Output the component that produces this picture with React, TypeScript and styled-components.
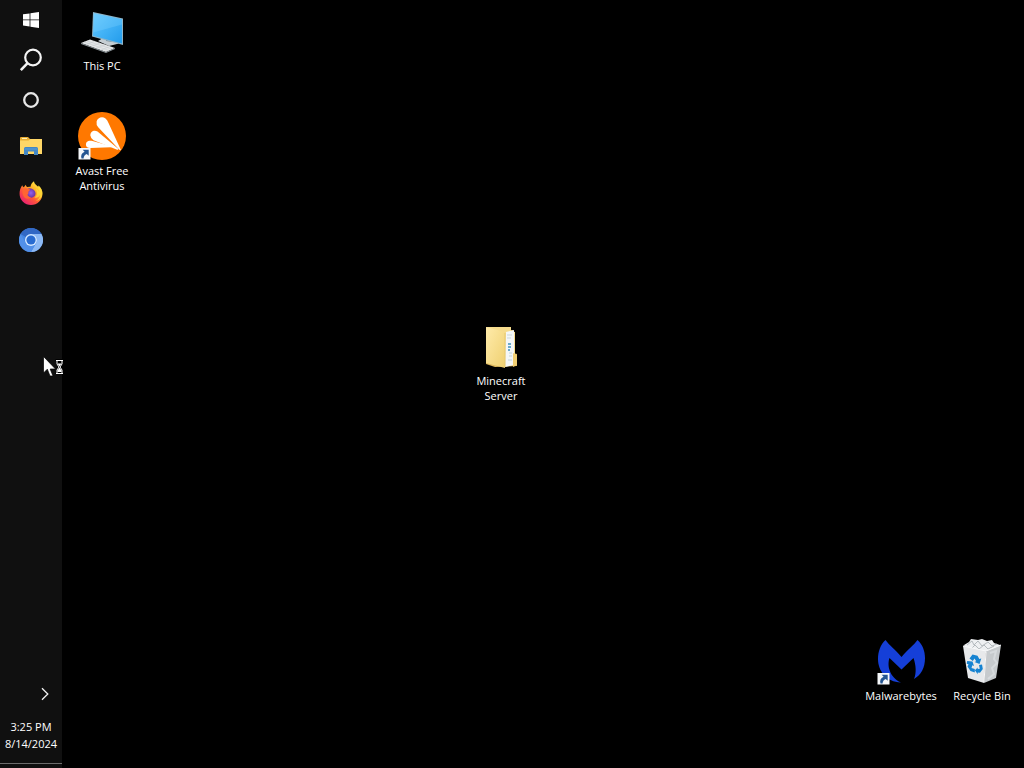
import React from "react";
import styled, { createGlobalStyle } from "styled-components";

const GlobalStyle = createGlobalStyle`
  * { box-sizing: border-box; }
  body {
    margin: 0;
    background: #000;
    color: #fff;
    font-family: "Segoe UI", "Open Sans", "Noto Sans", sans-serif;
    font-size: 11px;
    overflow: hidden;
  }
  svg { display: block; }
`;

const Screen = styled.div`
  position: relative;
  display: flex;
  min-height: 100vh;
`;

const Taskbar = styled.nav`
  display: flex;
  flex-direction: column;
  flex: none;
  width: 62px;
  background: #101010;
`;

const Group = styled.div<{ $top?: number }>`
  display: flex;
  flex-direction: column;
  margin-top: ${(p) => p.$top ?? 0}px;
`;

const BarButton = styled.button<{ $height: number }>`
  display: flex;
  align-items: center;
  justify-content: center;
  height: ${(p) => p.$height}px;
  padding: 0;
  border: 0;
  background: none;
  color: #fff;
`;

const Tray = styled.div`
  display: flex;
  flex-direction: column;
  margin-top: auto;
`;

const TrayToggle = styled(BarButton)`
  align-self: flex-end;
  width: 34px;
`;

const Clock = styled.button`
  padding: 0;
  margin: 8px 0 11px;
  border: 0;
  background: none;
  color: #fff;
  font: inherit;
  line-height: 17px;
  text-align: center;
`;

const ShowDesktop = styled.button`
  height: 5px;
  padding: 0;
  border: 0;
  border-top: 1px solid #6c6c6c;
  background: none;
`;

const Desktop = styled.main`
  position: relative;
  flex: 1;
`;

const Shortcut = styled.button<{ $left?: number; $top?: number; $right?: number; $bottom?: number }>`
  position: absolute;
  ${(p) => p.$left !== undefined && `left: ${p.$left}px;`}
  ${(p) => p.$top !== undefined && `top: ${p.$top}px;`}
  ${(p) => p.$right !== undefined && `right: ${p.$right}px;`}
  ${(p) => p.$bottom !== undefined && `bottom: ${p.$bottom}px;`}
  display: flex;
  flex-direction: column;
  align-items: center;
  gap: 3px;
  width: 76px;
  padding: 0 8px;
  border: 0;
  background: none;
  color: #fff;
  font: inherit;
  line-height: 15px;
  text-align: center;
`;

const Label = styled.span`
  display: flex;
  flex-direction: column;
  align-items: center;
  white-space: nowrap;
`;

const Pointer = styled.div`
  position: absolute;
  left: 43px;
  top: 356px;
  pointer-events: none;
`;

const StartIcon = () => (
  <svg width="16" height="16" viewBox="0 0 16 16" fill="#fff">
    <path d="M0 2.3 6.6 1.4V7.5H0zM7.4 1.3 16 0V7.5H7.4zM0 8.3H6.6V14.5L0 13.6zM7.4 8.3H16V16L7.4 14.7z" />
  </svg>
);

const SearchIcon = () => (
  <svg width="24" height="24" viewBox="0 0 24 24" fill="none" stroke="#f4f4f4" strokeWidth="2.2">
    <circle cx="14" cy="9.5" r="7.8" />
    <path d="M8.6 15.2 1.8 22.2" strokeWidth="2.6" />
  </svg>
);

const CortanaIcon = () => (
  <svg width="18" height="18" viewBox="0 0 18 18" fill="none" stroke="#e8e8e8" strokeWidth="2.3">
    <circle cx="9" cy="9" r="6.8" />
  </svg>
);

const ExplorerIcon = () => (
  <svg width="22" height="20" viewBox="0 0 22 20">
    <path d="M0 2.2Q0 1 1 1H8L10 3H21Q22 3 22 4V18H0z" fill="#e9ae35" />
    <path d="M0 4.5H8.5L10.5 3H22V18H0z" fill="#ffd767" />
    <path d="M2 2.5H7" stroke="#fff0b4" />
    <path d="M4 19V12.5Q4 11 5.5 11H16.5Q18 11 18 12.5V19H14V15.5H8V19z" fill="#4487c4" />
    <path d="M4.5 13H17.5" stroke="#5c9fd6" />
  </svg>
);

const FirefoxIcon = () => (
  <svg width="24" height="24" viewBox="0 0 24 24">
    <defs>
      <linearGradient id="fx-body" x1="0.85" y1="0.05" x2="0.15" y2="0.95">
        <stop offset="0" stopColor="#fff14b" />
        <stop offset="0.35" stopColor="#ffad24" />
        <stop offset="0.62" stopColor="#ff5639" />
        <stop offset="1" stopColor="#e61b78" />
      </linearGradient>
      <radialGradient id="fx-core">
        <stop offset="0" stopColor="#9462f0" />
        <stop offset="1" stopColor="#6b35a5" />
      </radialGradient>
    </defs>
    <path d="M3.2 4.2Q3.6 5.9 4.8 6.3L6.8 3.8Q7 5.6 8.3 6.1Q10 5.5 11.5 5.8C11.8 3.5 13.2 1.5 15 .3C15.2 3.5 18.3 4.6 19.4 6.3V4.4C22.2 6.7 23.6 10 23.4 13A11.4 11 0 0 1 .6 13C.4 9.8 1.5 6.5 3.2 4.2z" fill="url(#fx-body)" />
    <path d="M8 8.2Q11.6 6 15 9Q17.7 12 15.7 15Q12.7 18 9 15.6Q7 14 7.1 11.8z" fill="url(#fx-core)" />
    <path d="M3.5 8.2Q7.2 6.4 9.3 8.1L11.2 8.4Q10.8 9.6 9.6 10.2Q9.2 11.5 9.4 12.5Q8.4 13 8.6 14.2Q10 16.4 12 16.2Q9 19.2 5.7 16.8Q2.8 13.4 3.5 8.2z" fill="#ff6532" />
    <path d="M15 .3C15.2 4 20 5.4 20.2 11Q19 8.6 17 8Q19.7 14 15.4 16.6Q19.4 17.4 21.2 13.5Q20.7 18 16.4 20.3Q23.5 18 23.4 12Q23 7 19.4 4.4V6.3C18.3 4.6 15.2 3.5 15 .3z" fill="#ffdb38" opacity=".8" />
  </svg>
);

const ChromiumIcon = () => (
  <svg width="24" height="24" viewBox="0 0 24 24">
    <circle cx="12" cy="12" r="12" fill="#4385e3" />
    <path d="M1.6 6A12 12 0 0 1 22.4 6H12A6 6 0 0 0 6.8 9z" fill="#3268c4" />
    <path d="M12 6H22.4A12 12 0 0 1 12 24L17.2 15A6 6 0 0 0 12 6z" fill="#8db9f4" />
    <path d="M1.6 6A12 12 0 0 0 12 24L17.2 15A6 6 0 0 1 6.8 15z" fill="#5290e8" />
    <circle cx="12" cy="12" r="6" fill="#d5e8ff" />
    <circle cx="12" cy="12" r="4.6" fill="#286bd0" />
  </svg>
);

const ChevronIcon = () => (
  <svg width="8" height="14" viewBox="0 0 8 14" fill="none" stroke="#f2f2f2" strokeWidth="1.3">
    <path d="M1 1.3 6.8 7 1 12.7" />
  </svg>
);

const LinkBadge = () => (
  <g>
    <path d="M.5 36H12.5V47.5H.5z" fill="#f5f7fa" />
    <path d="M4.7 37.8H10.7V43.8L8.7 41.9Q5.7 43.2 5.6 46.5H3.5Q2 42 6.6 39.7z" fill="#245592" />
  </g>
);

const PcIcon = () => (
  <svg width="48" height="48" viewBox="0 0 48 48">
    <defs>
      <linearGradient id="pc-screen" x1="0" y1="0" x2="1" y2="1">
        <stop offset="0" stopColor="#65c8ff" />
        <stop offset="0.5" stopColor="#42b2f6" />
        <stop offset="1" stopColor="#239ceb" />
      </linearGradient>
    </defs>
    <path d="M25 31 34 33 41 36.5 31 39 20 34z" fill="#c6ced3" />
    <path d="M28 30H35L34 35 28 34z" fill="#778894" />
    <path d="M15 5 45 11.5V38L14 29.5z" fill="#8fb4c8" />
    <path d="M15.8 6.2 44 12.3V36.5L15 28.7z" fill="url(#pc-screen)" />
    <path d="M15.8 6.2 44 12.3V17.5L15.2 25.5z" fill="#8ad8ff" opacity=".28" />
    <path d="M3 36 12 32.5 37 41 28 45z" fill="#e5e7e8" />
    <path d="M3 36 28 45V46L3 37zM28 45 37 41V42L28 46z" fill="#8e979b" />
    <path d="M6 35 31 43.5M9 34 34 42M8 37.7 17 34.2M13 39.5 22 36M18 41.3 27 37.7M23 43.1 32 39.4" stroke="#c8cdd0" strokeWidth=".6" />
  </svg>
);

const AvastIcon = () => (
  <svg width="48" height="48" viewBox="0 0 48 48">
    <circle cx="24" cy="24" r="24" fill="#ff7800" />
    <g fill="#fff">
      <path d="M18.6 9.5C19.4 5.6 24.2 4 27.5 6.4Q29.5 8 30.5 11L42.8 37.8Q42.4 38.6 41.4 37.8L20.2 15.3Q18 12.8 18.6 9.5z" />
      <path d="M12.4 23.5C12 19.6 16.2 17.6 19.5 19.6L40.2 36.8Q40.6 38 39.2 37.7L15.5 28.3Q12.8 27 12.4 23.5z" />
      <path d="M8 33.2C7.5 30 10 28.2 13.5 28.8L33.5 34.2Q34.5 35 33 35.2L12 36Q8.5 35.8 8 33.2z" />
    </g>
    <LinkBadge />
  </svg>
);

const FolderIcon = () => (
  <svg width="48" height="48" viewBox="0 0 48 48">
    <defs>
      <linearGradient id="folder-front" x1="0" y1="0" x2="1" y2="1">
        <stop offset="0" stopColor="#ffebaa" />
        <stop offset="1" stopColor="#efd071" />
      </linearGradient>
    </defs>
    <path d="M9 5H34V8H36V31L40 32V44L18 45 9 42z" fill="#deb85d" />
    <path d="M10 5H34V9L38 10V43L25 45z" fill="#f6dc8e" />
    <path d="M29 10 37 8V43L28 45z" fill="#f4f7f8" />
    <path d="M30 13H35M30 16H34" stroke="#cbd7da" />
    <path d="M31 22H34M31 25H34M31 28H33" stroke="#3e91ba" strokeWidth="1.5" />
    <path d="M32 31H35M32 34H35M31 38H35" stroke="#c0d3dc" />
    <path d="M9 5 28 10V46L9 41z" fill="url(#folder-front)" />
    <path d="M36 31 40 33V43L36 45z" fill="#f1cf73" />
    <path d="M28 11V45" stroke="#e5c873" />
  </svg>
);

const MalwarebytesIcon = () => (
  <svg width="48" height="48" viewBox="0 0 48 48">
    <path
      d="M8.5 3C12 8 18 12 24.5 20C31 12 37 8 40.5 3C45.5 7.5 48 14 48 21C48 31 44 38 37 42C39.6 36 39 28 36.5 21L24.5 32.5 12.5 21C10 28 12 40 24 45.5C9.5 45 1 34 1 22C1 14.5 3.5 7.5 8.5 3z"
      fill="#153fd8"
    />
    <LinkBadge />
  </svg>
);

const RecycleIcon = () => (
  <svg width="48" height="48" viewBox="0 0 48 48">
    <path d="M6 8 11 5 13 2 20 3 24 2 29 4 34 3 36 6 42 8 39 16H9z" fill="#eef0f2" />
    <path d="M9 8 14 4 16 8 20 4 24 9 30 5 34 9 39 7M13 12 17 8 21 12 26 8 30 12 36 9" fill="none" stroke="#b4babe" />
    <path d="M5 9 28 14 26 46 10 41z" fill="#e7e9eb" />
    <path d="M28 14 43 8 38 41 26 46z" fill="#c6cacd" />
    <path d="M5 9 28 14 43 8" fill="none" stroke="#f8f9fa" />
    <path d="M32 16 38 14 36 22 39 26 34 31 36 37 30 42" fill="none" stroke="#d6dadd" strokeWidth="2" />
    <path d="M28 15 26 45" stroke="#f7f7f7" />
    <g fill="#1683d1">
      <path d="M11.5 21.5 14.5 17.5 19.5 18.8 21.3 22 23.3 21.5 21.5 27 16.5 25 18.2 24.2 16.5 21.5 14.8 24z" />
      <path d="M9.2 24 14.5 24.5 16 29 14.3 28.3 13.5 31 16.8 32V35.5L12.5 34 9.5 29.5 10.5 27.3 8.7 26.7z" />
      <path d="M21 28 24 27.5 24.8 32 22 35.7 19.7 35.5V37.3L16.9 33.2 19.7 30.4V32L21.8 31.8z" />
    </g>
  </svg>
);

const BusyPointer = () => (
  <svg width="20" height="22" viewBox="0 0 20 22">
    <path d="M.5.5V17L4.3 13.2 7 20H10L7.2 13H12.5z" fill="#fff" stroke="#000" strokeWidth=".7" />
    <path d="M12.5 3H20V5.5V18H12.5V15H13.5V12L15.5 10 13.5 8V5.5H12.5z" fill="#000" />
    <path d="M13 4.5H20M13 17.5H20" stroke="#fff" />
    <path d="M14 5V8L16 11 14 14V17M19 5V8L17 11 19 14V17" fill="none" stroke="#fff" />
    <path d="M14.5 7.5H18.5L16.5 10.5zM16.5 11.5 18.5 14.5V16H14.5V14.5z" fill="#fff" />
  </svg>
);

export default function App() {
  return (
    <>
      <GlobalStyle />
      <Screen>
        <Taskbar aria-label="Taskbar">
          <Group>
            <BarButton $height={40} aria-label="Start"><StartIcon /></BarButton>
            <BarButton $height={40} aria-label="Search"><SearchIcon /></BarButton>
            <BarButton $height={40} aria-label="Cortana"><CortanaIcon /></BarButton>
          </Group>
          <Group $top={2}>
            <BarButton $height={47} aria-label="File Explorer"><ExplorerIcon /></BarButton>
            <BarButton $height={47} aria-label="Firefox"><FirefoxIcon /></BarButton>
            <BarButton $height={47} aria-label="Chromium"><ChromiumIcon /></BarButton>
          </Group>
          <Tray>
            <TrayToggle $height={32} aria-label="Show hidden icons"><ChevronIcon /></TrayToggle>
            <Clock>
              3:25 PM
              <br />
              8/14/2024
            </Clock>
            <ShowDesktop aria-label="Show desktop" />
          </Tray>
        </Taskbar>
        <Desktop>
          <Shortcut $left={2} $top={7}><PcIcon /><Label>This PC</Label></Shortcut>
          <Shortcut $left={2} $top={112}><AvastIcon /><Label><span>Avast Free</span><span>Antivirus</span></Label></Shortcut>
          <Shortcut $left={401} $top={322}><FolderIcon /><Label><span>Minecraft</span><span>Server</span></Label></Shortcut>
          <Shortcut $right={85} $bottom={65}><MalwarebytesIcon /><Label>Malwarebytes</Label></Shortcut>
          <Shortcut $right={4} $bottom={65}><RecycleIcon /><Label>Recycle Bin</Label></Shortcut>
        </Desktop>
        <Pointer><BusyPointer /></Pointer>
      </Screen>
    </>
  );
}
